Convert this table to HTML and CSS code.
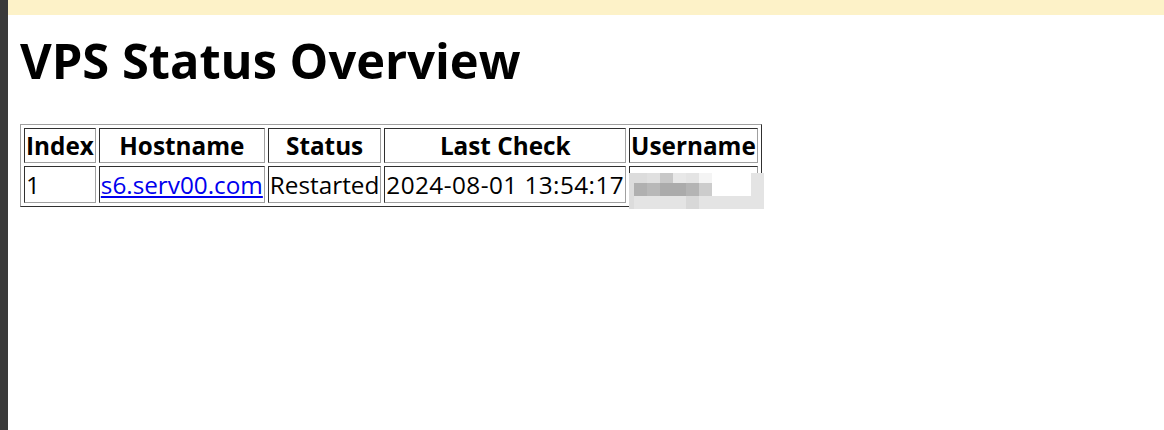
FILE: index.html
```html
<!DOCTYPE html>
<html lang="en">
<head>
  <meta charset="UTF-8">
  <title>VPS Status Overview</title>
  <link rel="stylesheet" href="styles.css">
</head>
<body>
  <!-- side strip + notice bar -->
  <div class="side-strip"></div>
  <div class="main">
    <div class="notice-bar"></div>

    <div class="content">
      <h1>VPS Status Overview</h1>

      <table class="status-table">
        <tr>
          <th>Index</th>
          <th>Hostname</th>
          <th>Status</th>
          <th>Last Check</th>
          <th>Username</th>
        </tr>
        <tr>
          <td>1</td>
          <td><a href="#">s6.serv00.com</a></td>
          <td>Restarted</td>
          <td class="date-cell">2024-08-01 13:54:17</td>
          <td class="user-cell">
            <!-- username blurred out -->
            <div class="mosaic">
              <span class="m0"></span><span class="m1"></span><span class="m2"></span><span class="m3"></span><span class="m4"></span><span class="m5"></span><span class="m6"></span><span class="mw"></span><span class="mz"></span>
              <span class="m0"></span><span class="m7"></span><span class="m8"></span><span class="m9"></span><span class="m9"></span><span class="m10"></span><span class="m11"></span><span class="mw"></span><span class="mz"></span>
              <span class="m0"></span><span class="mz"></span><span class="mz"></span><span class="mz"></span><span class="mz"></span><span class="m12"></span><span class="mz"></span><span class="mz"></span><span class="mz"></span>
            </div>
          </td>
        </tr>
      </table>
    </div>
  </div>
</body>
</html>
```

FILE: styles.css
```css
html, body {
  height: 100%;
}

body {
  margin: 0;
  display: flex;
  font-family: "Open Sans", "Noto Sans", sans-serif;
  background-color: #fff;
  color: #000;
}

.side-strip {
  width: 8px;
  flex-shrink: 0;
  background-color: #3a3a3a;
}

.main {
  flex: 1;
  display: flex;
  flex-direction: column;
}

.notice-bar {
  height: 15px;
  background-color: #fdf2c8;
}

.content {
  padding: 0 12px;
}

h1 {
  margin: 15px 0 34px;
  font-size: 48.8px;
  font-weight: 700;
  line-height: 60px;
}

/* table = html border="1" look */
.status-table {
  border: 1px solid;
  border-color: #a0a0a0 #303030 #303030 #a0a0a0;
  border-spacing: 3px;
  font-size: 24.3px;
}

.status-table th,
.status-table td {
  border: 1px solid;
  border-color: #303030 #a0a0a0 #a0a0a0 #303030;
  padding: 1px;
  height: 33px;
  line-height: 33px;
}

.status-table th {
  height: 31px;
  line-height: 31px;
}

.status-table td {
  text-align: left;
}

.status-table a {
  color: #0000ee;
}

.date-cell {
  letter-spacing: 0.45px;
}

.user-cell {
  position: relative;
  width: 116px;
}

.mosaic {
  position: absolute;
  left: -1px;
  top: 6px;
  display: grid;
  grid-template-columns: 5px repeat(6, 13px) 39px 13px;
  grid-template-rows: 10px 13px 13px;
}

.m0 { background: #dcdcdc; }
.m1 { background: #dcdcdc; }
.m2 { background: #e0e0e0; }
.m3 { background: #c8c8c8; }
.m4 { background: #e8e8e8; }
.m5 { background: #e4e4e4; }
.m6 { background: #f4f4f4; }
.m7 { background: #b0b0b0; }
.m8 { background: #b8b8b8; }
.m9 { background: #ababab; }
.m10 { background: #b4b4b4; }
.m11 { background: #cccccc; }
.m12 { background: #d8d8d8; }
.mw { background: #fff; }
.mz { background: #e4e4e4; }
```
